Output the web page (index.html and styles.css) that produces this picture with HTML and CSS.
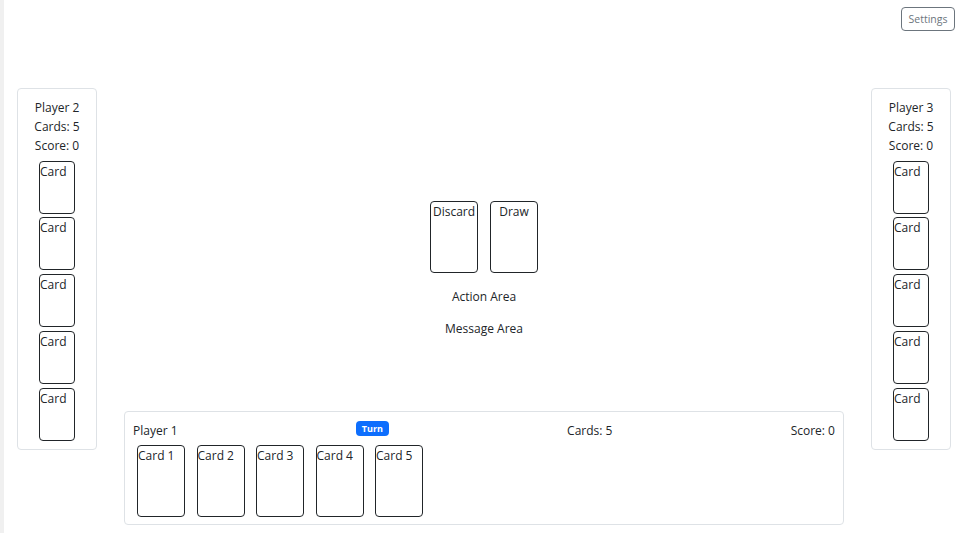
FILE: index.html
```html
<!DOCTYPE html>
<html lang="en">
<head>
<meta charset="utf-8">
<title>Card Game</title>
<link rel="stylesheet" href="styles.css">
</head>
<body>
<div class="app">
  <div class="topbar">
    <button class="btn-settings">Settings</button>
  </div>
  <div class="main">
    <div class="side-panel">
      <div class="info">Player 2</div>
      <div class="info">Cards: 5</div>
      <div class="info">Score: 0</div>
      <div class="side-cards">
        <div class="card side-card">Card</div>
        <div class="card side-card">Card</div>
        <div class="card side-card">Card</div>
        <div class="card side-card">Card</div>
        <div class="card side-card">Card</div>
      </div>
    </div>
    <div class="center">
      <div class="table">
        <div class="piles">
          <div class="card pile">Discard</div>
          <div class="card pile">Draw</div>
        </div>
        <div class="area-label action">Action Area</div>
        <div class="area-label message">Message Area</div>
      </div>
      <div class="hand-panel">
        <div class="hand-header">
          <span>Player 1</span>
          <span class="badge">Turn</span>
          <span>Cards: 5</span>
          <span>Score: 0</span>
        </div>
        <div class="hand-cards">
          <div class="card hand-card">Card 1</div>
          <div class="card hand-card">Card 2</div>
          <div class="card hand-card">Card 3</div>
          <div class="card hand-card">Card 4</div>
          <div class="card hand-card">Card 5</div>
        </div>
      </div>
    </div>
    <div class="side-panel">
      <div class="info">Player 3</div>
      <div class="info">Cards: 5</div>
      <div class="info">Score: 0</div>
      <div class="side-cards">
        <div class="card side-card">Card</div>
        <div class="card side-card">Card</div>
        <div class="card side-card">Card</div>
        <div class="card side-card">Card</div>
        <div class="card side-card">Card</div>
      </div>
    </div>
  </div>
</div>
</body>
</html>
```

FILE: styles.css
```css
* { box-sizing: border-box; }
html, body { margin: 0; padding: 0; background: #fff; }
body {
  font-family: "Open Sans", "Noto Sans", "Liberation Sans", sans-serif;
  font-size: 12px;
  line-height: 19.2px;
  color: #212529;
}
.app {
  width: 962px;
  height: 533px;
  border-left: 4px solid #f0f0f0;
  display: flex;
  flex-direction: column;
  overflow: hidden;
}
.topbar {
  display: flex;
  justify-content: flex-end;
  padding: 7px 7px 0 0;
  height: 31px;
}
.btn-settings {
  font-family: inherit;
  font-size: 10.5px;
  line-height: 14px;
  color: #6c757d;
  background: #fff;
  border: 1px solid #6c757d;
  border-radius: 4px;
  width: 54px;
  height: 24px;
  padding: 0;
}
.main {
  flex: 1;
  display: flex;
  align-items: flex-start;
  padding: 0 11px 0 13px;
}
.side-panel {
  width: 80px;
  margin-top: 57px;
  border: 1px solid #dee2e6;
  border-radius: 4px;
  padding: 9px 8px 8px;
  display: flex;
  flex-direction: column;
  align-items: center;
}
.info { text-align: center; white-space: nowrap; }
.side-cards {
  margin-top: 5px;
  display: flex;
  flex-direction: column;
  gap: 3.75px;
}
.card {
  border: 1px solid #212529;
  border-radius: 4px;
  background: #fff;
  white-space: nowrap;
  overflow: hidden;
}
.side-card { width: 36px; height: 53px; }
.center {
  flex: 1;
  display: flex;
  flex-direction: column;
  height: 502px;
}
.table {
  margin-top: 170px;
  display: flex;
  flex-direction: column;
  align-items: center;
}
.piles { display: flex; gap: 12px; }
.pile { width: 48px; height: 72px; text-align: center; }
.area-label { text-align: center; }
.action { margin-top: 14px; }
.message { margin-top: 13px; }
.hand-panel {
  margin: auto 27px 8px 27px;
  border: 1px solid #dee2e6;
  border-radius: 4px;
  padding: 9px 8px 7px;
}
.hand-header {
  display: flex;
  justify-content: space-between;
  align-items: center;
}
.badge {
  background: #0d6efd;
  color: #fff;
  font-weight: 700;
  font-size: 9px;
  line-height: 11px;
  padding: 2px 6px;
  border-radius: 4px;
  position: relative;
  top: -2px;
}
.hand-cards {
  margin-top: 5px;
  display: flex;
  gap: 11.5px;
  padding-left: 4px;
}
.hand-card { width: 48px; height: 72px; }
```
